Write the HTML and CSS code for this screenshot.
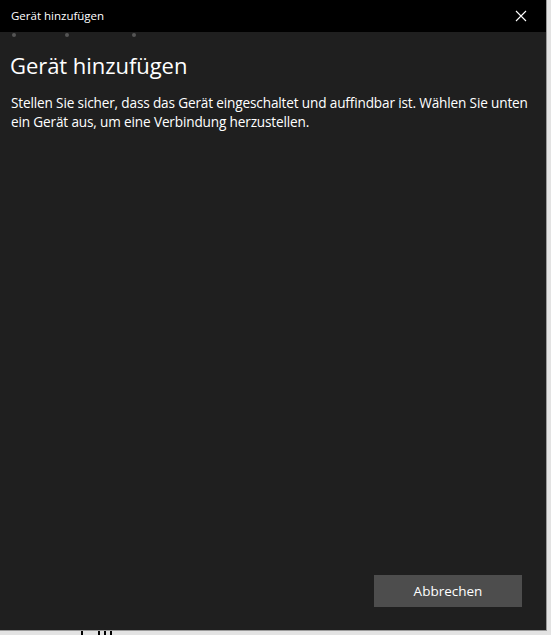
FILE: index.html
```html
<!DOCTYPE html>
<html lang="de">
<head>
<meta charset="utf-8">
<link rel="stylesheet" href="styles.css">
</head>
<body>
<div class="screen">
  <div class="window">
    <div class="titlebar">
      <span class="title">Gerät hinzufügen</span>
      <svg class="close" width="12" height="12" viewBox="0 0 12 12"><path d="M1 1L11 11M11 1L1 11" stroke="#fff" stroke-width="1.1"/></svg>
    </div>
    <div class="dots"><span class="dot d1"></span><span class="dot d2"></span><span class="dot d3"></span></div>
    <div class="content">
      <h1 class="heading">Gerät hinzufügen</h1>
      <p class="desc">Stellen Sie sicher, dass das Gerät eingeschaltet und auffindbar ist. Wählen Sie unten ein Gerät aus, um eine Verbindung herzustellen.</p>
      <div class="spacer"></div>
      <div class="actions"><button class="btn">Abbrechen</button></div>
    </div>
  </div>
  <div class="below"><span class="tick t1"></span><span class="tick t2"></span><span class="tick t3"></span><span class="tick t4"></span></div>
</div>
</body>
</html>
```
FILE: styles.css
```css
html, body { margin: 0; padding: 0; }
body { background: #e3e3e3; width: 551px; height: 635px; overflow: hidden; font-family: "Open Sans", "Noto Sans", sans-serif; }
.screen { position: relative; width: 551px; height: 635px; }
.window { width: 547px; height: 631px; background: #1f1f1f; display: flex; flex-direction: column; border-right: 1px solid #9a9a9a; border-bottom: 1px solid #9a9a9a; box-sizing: border-box; }
.titlebar { height: 32px; background: #000; display: flex; align-items: center; justify-content: space-between; padding: 0 19px 0 11px; flex: none; }
.title { color: #fff; font-size: 11.5px; margin-top: -2px; }
.close { display: block; margin-top: -1px; }
.dots { position: relative; height: 0; }
.dot { position: absolute; top: 1px; width: 4px; height: 4px; border-radius: 50%; background: #555; }
.d1 { left: 12px; } .d2 { left: 65px; } .d3 { left: 132px; }
.content { flex: 1; display: flex; flex-direction: column; padding: 0 14px 23px 10px; }
.heading { margin: 18px 0 0; color: #fff; font-weight: 400; font-size: 22px; line-height: 30px; letter-spacing: -0.05px; }
.desc { margin: 13px 0 0 1px; max-width: 522px; color: #fff; font-size: 13.6px; line-height: 19px; letter-spacing: -0.15px; }
.spacer { flex: 1; }
.actions { display: flex; justify-content: flex-end; padding-right: 10px; }
.btn { width: 148px; height: 32px; background: #4d4d4d; border: none; color: #fff; font-family: inherit; font-size: 13.5px; padding: 0; }
.below { position: absolute; left: 0; top: 631px; width: 551px; height: 4px; display: flex; }
.tick { position: absolute; top: 0; width: 2px; height: 4px; background: #000; }
.t1 { left: 81px; } .t2 { left: 98px; } .t3 { left: 104px; } .t4 { left: 110px; }
```
